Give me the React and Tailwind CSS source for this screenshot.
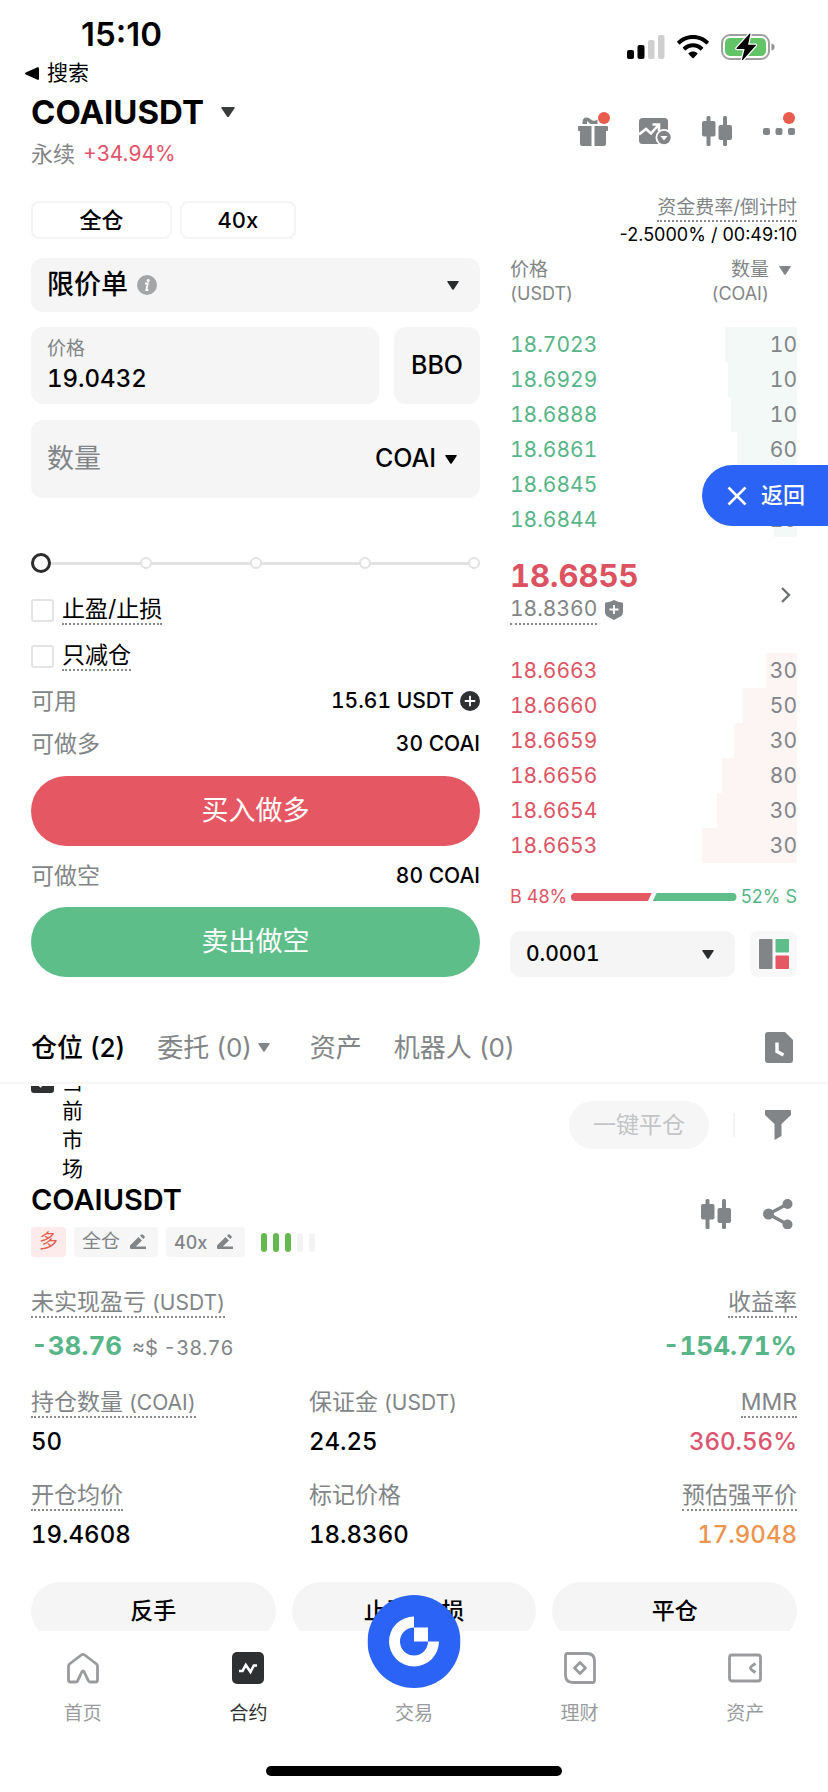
import { useState } from 'react';

const asks = [
  { price: '18.7023', qty: 10, depth: 25 },
  { price: '18.6929', qty: 10, depth: 24 },
  { price: '18.6888', qty: 10, depth: 23 },
  { price: '18.6861', qty: 60, depth: 21 },
  { price: '18.6845', qty: 60, depth: 11 },
  { price: '18.6844', qty: 20, depth: 8 },
];

const bids = [
  { price: '18.6663', qty: 30, depth: 11 },
  { price: '18.6660', qty: 50, depth: 19 },
  { price: '18.6659', qty: 30, depth: 22 },
  { price: '18.6656', qty: 80, depth: 26 },
  { price: '18.6654', qty: 30, depth: 28 },
  { price: '18.6653', qty: 30, depth: 33 },
];

function Caret({ className = 'w-3 text-[#2b2c2e]' }) {
  return (
    <svg viewBox="0 0 12 9" className={`shrink-0 pointer-events-none ${className}`} fill="currentColor" aria-hidden="true">
      <path d="M1 0h10q1.300 0 .6 1.100L6.700 8.400q-.7.900-1.400 0L.4 1.100Q-.3 0 1 0z" />
    </svg>
  );
}

function CandlesIcon() {
  return (
    <svg viewBox="0 0 30 30" className="w-[30px] h-[30px] text-[#828587]" fill="currentColor" aria-hidden="true">
      <rect x="4.500" y="0" width="4" height="30" rx="1.500" />
      <rect x="0" y="5" width="13.500" height="15.500" rx="2" />
      <rect x="21" y="0" width="4" height="30" rx="1.500" />
      <rect x="16.500" y="9" width="13.500" height="15" rx="2" />
    </svg>
  );
}

function StatusIcons() {
  return (
    <div className="flex items-center gap-3">
      <svg viewBox="0 0 38 24" className="w-[38px] h-6" aria-hidden="true">
        <rect x="0" y="15" width="7" height="9" rx="2" />
        <rect x="10.500" y="10" width="7" height="14" rx="2" />
        <rect x="21" y="5" width="6.500" height="19" rx="2" fill="#cfcfcf" />
        <rect x="31" y="0" width="6.500" height="24" rx="2" fill="#cfcfcf" />
      </svg>
      <svg viewBox="0 0 32 24" className="w-8 h-6" aria-hidden="true">
        <path d="M16 0C9.800 0 4.200 2.400.3 6.300q-.5.500 0 1l1.800 1.900q.5.500 1 0C6.500 5.900 11 4.100 16 4.100s9.500 1.800 12.900 5.100q.5.500 1 0l1.800-1.900q.5-.5 0-1C27.800 2.400 22.200 0 16 0z" />
        <path d="M16 8.200c-3.900 0-7.400 1.500-10 4-.4.400-.4.700 0 1.100l1.900 1.900q.5.400 1 0c1.900-1.800 4.400-2.900 7.100-2.900s5.200 1.100 7.100 2.900q.5.400 1 0l1.900-1.900c.4-.4.400-.7 0-1.100-2.600-2.500-6.100-4-10-4z" />
        <path d="M16 16.400c-1.700 0-3.200.6-4.400 1.600q-.5.500 0 1l3.700 4q.7.700 1.400 0l3.700-4q.5-.5 0-1c-1.200-1-2.700-1.600-4.400-1.600z" />
      </svg>
      <svg viewBox="0 0 54 28" className="w-[54px] h-7" aria-hidden="true">
        <rect x="1" y="2" width="47" height="24" rx="8" fill="none" stroke="#a0a0a0" strokeWidth="2" />
        <rect x="4" y="5" width="41" height="18" rx="5" fill="#62c466" />
        <path d="M50.500 10.500q3 .8 3 3.500t-3 3.500z" fill="#8e8e8e" />
        <path d="M28.500.8 15.600 15q-.6.900.4.900h7.600L21 26.500q-.1 1.200.9.500L34.800 12.600q.6-.9-.4-.9H27L29.400 1.300Q29.400.2 28.500.8z" stroke="#fff" strokeWidth="2.500" paintOrder="stroke" />
      </svg>
    </div>
  );
}

function StatusBar() {
  return (
    <div className="flex items-start justify-between pt-[13px] pl-[25px] pr-[53px]">
      <div>
        <div className="h-11 pl-14 text-[33px] leading-[42px] font-semibold normal-nums">15:10</div>
        <a href="#search" className="flex h-8 items-center gap-2 text-[21px] leading-8">
          <svg viewBox="0 0 14 13" className="w-3.5" aria-hidden="true">
            <path d="M12.500.2Q14 0 14 1.200v10.600q0 1.400-1.500 1L.8 7.400q-1.400-.9 0-1.800z" />
          </svg>
          搜索
        </a>
      </div>
      <div className="flex h-[68px] items-center">
        <StatusIcons />
      </div>
    </div>
  );
}

function SymbolHeader() {
  return (
    <header className="flex items-center justify-between pl-[31px] pr-[33px]">
      <div>
        <h1>
          <button className="flex h-[46px] items-center gap-[17px] text-[33px] leading-[46px] font-bold">
            COAIUSDT
            <Caret className="w-3.5 text-[#3a3b3d]" />
          </button>
        </h1>
        <div className="flex h-[38px] items-center gap-2 text-[21px] normal-nums">
          <span className="text-[22px] text-[#828587]">永续</span>
          <span className="text-[#e0546b]">+34.94%</span>
        </div>
      </div>
      <div className="flex items-center gap-[31px] text-[#828587]">
        <button aria-label="活动" className="relative">
          <svg viewBox="0 0 30 30" className="w-[30px] h-[30px]" fill="currentColor" aria-hidden="true">
            <path d="M1 10h12.500v20H4q-2 0-2-2V15H1q-1 0-1-1v-3q0-1 1-1zM16.500 10H29q1 0 1 1v3q0 1-1 1h-1v13q0 2-2 2h-9.500z" />
            <path d="M4.500 8V6q0-4.500 4-4.500 2.500 0 4.500 2t4.500 1l2-1V8z M9 5v3h3.500z" fillRule="evenodd" />
          </svg>
          <span className="absolute -top-1 -right-0.5 size-3 rounded-full bg-[#e85b4d]" />
        </button>
        <button aria-label="行情提醒">
          <svg viewBox="0 0 32 28" className="w-8 h-7" aria-hidden="true">
            <rect x="0" y="1" width="29" height="26" rx="3.500" fill="currentColor" />
            <path d="M0 17.500 7 12l5 4.500L19 8.500M13.500 7.500H20V14" fill="none" stroke="#fff" strokeWidth="2.600" />
            <circle cx="25" cy="20.500" r="8.500" fill="#fff" />
            <circle cx="25" cy="20.500" r="6.700" fill="currentColor" />
            <path d="M21.500 19h7L25 23.500z" fill="#fff" />
          </svg>
        </button>
        <button aria-label="K线">
          <CandlesIcon />
        </button>
        <button aria-label="更多" className="relative flex w-8 h-[30px] items-center">
          <svg viewBox="0 0 32 8" className="w-8" fill="currentColor" aria-hidden="true">
            <rect x="0" y="1" width="7" height="7" rx="2" />
            <rect x="12.500" y="1" width="7" height="7" rx="2" />
            <rect x="25" y="1" width="7" height="7" rx="2" />
          </svg>
          <span className="absolute -top-1 right-0 size-3 rounded-full bg-[#e85b4d]" />
        </button>
      </div>
    </header>
  );
}

function CheckRow({ id, label, className }) {
  return (
    <div className={`flex h-[30px] items-center gap-2 ${className}`}>
      <input id={id} type="checkbox" className="size-[23px] appearance-none rounded-[3px] border-2 border-[#e4e4e4] checked:bg-[#333]" />
      <label htmlFor={id} className="border-b-2 border-dotted border-[#8a8a8a] text-[23px] leading-7">
        {label}
      </label>
    </div>
  );
}

function InfoRow({ label, className, children }) {
  return (
    <div className={`flex h-[30px] items-center justify-between text-[21px] ${className}`}>
      <span className="text-[23px] text-[#828587]">{label}</span>
      <span className="flex items-center gap-[6px] font-medium">{children}</span>
    </div>
  );
}

function OrderForm() {
  const [price, setPrice] = useState('19.0432');
  const [qty, setQty] = useState('');
  const [percent, setPercent] = useState(0);

  return (
    <section className="flex min-w-0 flex-col pt-[5px]" aria-label="下单">
      <div className="flex gap-2 text-[22px] font-medium">
        <button className="h-[38px] w-[141px] rounded-lg border-2 border-[#f4f4f4]">全仓</button>
        <button className="h-[38px] w-[116px] rounded-lg border-2 border-[#f4f4f4]">40x</button>
      </div>

      <div className="mt-[19px] flex h-[54px] items-center rounded-xl bg-[#f5f5f5] pl-4 pr-[21px]">
        <select aria-label="订单类型" className="appearance-none bg-transparent text-[27px] font-medium outline-none">
          <option>限价单</option>
        </select>
        <svg viewBox="0 0 20 20" className="ml-[9px] size-5" aria-hidden="true">
          <circle cx="10" cy="10" r="10" fill="#a3a5a7" />
          <circle cx="11.200" cy="5.400" r="1.500" fill="#fff" />
          <path d="M8 8.500h2.800L9.300 15h2" fill="none" stroke="#fff" strokeWidth="1.800" />
        </svg>
        <Caret className="ml-auto w-3 text-[#2b2c2e]" />
      </div>

      <div className="mt-[15px] flex h-[77px] gap-[15px]">
        <div className="flex min-w-0 flex-1 flex-col rounded-xl bg-[#f5f5f5] px-4 pt-2">
          <label htmlFor="price" className="text-[19px] leading-7 text-[#828587]">价格</label>
          <input
            id="price"
            value={price}
            onChange={(e) => setPrice(e.target.value)}
            className="h-8 w-full bg-transparent text-2xl font-medium outline-none"
          />
        </div>
        <button className="w-[86px] rounded-xl bg-[#f5f5f5] text-[25px] font-medium">BBO</button>
      </div>

      <div className="mt-4 flex h-[78px] items-center rounded-xl bg-[#f5f5f5] pl-4 pr-[23px]">
        <input
          aria-label="数量"
          placeholder="数量"
          value={qty}
          onChange={(e) => setQty(e.target.value)}
          className="h-10 min-w-0 flex-1 bg-transparent text-[27px] outline-none placeholder:text-[#828587]"
        />
        <select aria-label="数量单位" className="mr-2 appearance-none bg-transparent text-[25px] font-medium outline-none">
          <option>COAI</option>
        </select>
        <Caret className="w-3 text-black" />
      </div>

      <div className="relative mt-[53px] flex h-6 items-center">
        <div className="h-[3px] w-full bg-[#e2e2e2]" />
        <div className="absolute inset-x-0 flex justify-between">
          {[0, 25, 50, 75, 100].map((p) => (
            <span key={p} className="size-3 rounded-full border-2 border-[#e2e2e2] bg-white" />
          ))}
        </div>
        <input
          type="range"
          min="0"
          max="100"
          value={percent}
          onChange={(e) => setPercent(Number(e.target.value))}
          aria-label="仓位比例"
          className="absolute inset-x-0 w-full appearance-none bg-transparent [&::-webkit-slider-thumb]:size-5 [&::-webkit-slider-thumb]:appearance-none [&::-webkit-slider-thumb]:rounded-full [&::-webkit-slider-thumb]:border-3 [&::-webkit-slider-thumb]:border-solid [&::-webkit-slider-thumb]:border-[#2b2c2e] [&::-webkit-slider-thumb]:bg-white"
        />
      </div>

      <CheckRow id="tpsl" label="止盈/止损" className="mt-5" />
      <CheckRow id="reduce" label="只减仓" className="mt-4" />

      <InfoRow label="可用" className="mt-[15px]">
        15.61 USDT
        <button aria-label="划转">
          <svg viewBox="0 0 20 20" className="size-5" aria-hidden="true">
            <circle cx="10" cy="10" r="10" fill="#2f3032" />
            <path d="M10 4.800v10.400M4.800 10h10.400" stroke="#fff" strokeWidth="1.800" />
          </svg>
        </button>
      </InfoRow>
      <InfoRow label="可做多" className="mt-[13px]">30 COAI</InfoRow>
      <button className="mt-[17px] h-[70px] rounded-full bg-[#e55762] text-[27px] text-white">买入做多</button>
      <InfoRow label="可做空" className="mt-[15px]">80 COAI</InfoRow>
      <button className="mt-4 h-[70px] rounded-full bg-[#5ebe8a] text-[27px] text-white">卖出做空</button>
    </section>
  );
}

function BookRows({ rows, priceClass, tint }) {
  return (
    <tbody>
      {rows.map((r) => (
        <tr
          key={r.price}
          className="h-[35px] text-[21px] leading-[35px]"
          style={{ backgroundImage: `linear-gradient(to left, ${tint} ${r.depth}%, transparent ${r.depth}%)` }}
        >
          <td className={`p-0 ${priceClass}`}>{r.price}</td>
          <td className="p-0 text-right text-[#828587]">{r.qty}</td>
        </tr>
      ))}
    </tbody>
  );
}

function OrderBook() {
  return (
    <section className="relative flex min-w-0 flex-col" aria-label="盘口">
      <div className="flex flex-col items-end">
        <span className="border-b-2 border-dotted border-[#8a8a8a] text-[19px] leading-6 text-[#828587]">资金费率/倒计时</span>
        <span className="text-[18px] leading-[25px] normal-nums">-2.5000% / 00:49:10</span>
      </div>

      <table className="mt-[11px] w-full border-collapse">
        <thead>
          <tr className="h-[69px] text-[19px] leading-6 text-[#828587]">
            <th className="p-0 text-left align-top font-normal">价格<br /><span className="text-[18px]">(USDT)</span></th>
            <th className="p-0 align-top font-normal">
              <div className="flex items-start justify-end gap-[10px] pr-[6px] text-right">
                <span>数量<br /><span className="text-[18px]">(COAI)</span></span>
                <Caret className="mt-2 w-3 text-[#828587]" />
              </div>
            </th>
          </tr>
        </thead>
        <BookRows rows={asks} priceClass="text-[#57b588]" tint="#f2f9f7" />
        <tbody>
          <tr className="h-[116px]">
            <td colSpan={2} className="p-0">
              <div className="flex items-center justify-between pr-[6px]">
                <div className="pb-2">
                  <div className="text-[31px] leading-[38px] font-bold text-[#dc5261]">18.6855</div>
                  <div className="flex items-center gap-2 text-[#828587]">
                    <span className="border-b-2 border-dotted border-[#8a8a8a] text-[21px] leading-7">18.8360</span>
                    <svg viewBox="0 0 18 20" className="w-[18px]" aria-hidden="true">
                      <path d="M9 0q4 2.300 8 2.500 1 .1 1 1V12q0 3-2.500 4.600L9 20l-6.500-3.400Q0 15 0 12V3.500q0-.9 1-1Q5 2.300 9 0z" fill="currentColor" />
                      <path d="M9 5v9M4.500 9.500h9" stroke="#fff" strokeWidth="1.800" />
                    </svg>
                  </div>
                </div>
                <button aria-label="展开盘口">
                  <svg viewBox="0 0 10 16" className="w-[10px] h-4" fill="none" stroke="#6f7274" strokeWidth="2.400" aria-hidden="true">
                    <path d="M1 1l7 7-7 7" />
                  </svg>
                </button>
              </div>
            </td>
          </tr>
        </tbody>
        <BookRows rows={bids} priceClass="text-[#dc5565]" tint="#fdf4f4" />
      </table>

      <div className="mt-[22px] flex h-6 items-center justify-between gap-1 text-[18px] leading-6 normal-nums">
        <span className="whitespace-nowrap text-[#dc5565]">B 48%</span>
        <svg viewBox="0 0 172 8" preserveAspectRatio="none" className="h-2 min-w-0 flex-1" aria-hidden="true">
          <path d="M4 0h80l-4 8H4Q0 8 0 4t4-4z" fill="#e55762" />
          <path d="M89 0h79q4 0 4 4t-4 4H85z" fill="#5ebe8a" />
        </svg>
        <span className="whitespace-nowrap text-[#57b588]">52% S</span>
      </div>

      <div className="mt-auto flex gap-[15px]">
        <div className="flex h-[46px] min-w-0 flex-1 items-center rounded-[10px] bg-[#f5f5f5] pl-4 pr-[21px]">
          <select aria-label="价格精度" className="min-w-0 flex-1 appearance-none bg-transparent text-[21px] font-medium outline-none">
            <option>0.0001</option>
          </select>
          <Caret />
        </div>
        <button aria-label="盘口布局" className="flex h-[46px] w-[47px] items-center justify-center rounded-lg bg-[#f8f8f8]">
          <svg viewBox="0 0 30 30" className="w-[30px]" aria-hidden="true">
            <rect x="0" y="0" width="13.500" height="30" rx="1" fill="#828587" />
            <rect x="16.500" y="0" width="13.500" height="13.500" rx="1" fill="#5ebe8a" />
            <rect x="16.500" y="16.500" width="13.500" height="13.500" rx="1" fill="#e55762" />
          </svg>
        </button>
      </div>

      <button className="absolute top-[269px] -right-[31px] flex h-[61px] w-[126px] items-center gap-[14px] rounded-l-full bg-[#2a63f5] pl-[25px] text-[22px] font-medium text-white">
        <svg viewBox="0 0 20 20" className="size-5" fill="none" stroke="currentColor" strokeWidth="2.500" aria-hidden="true">
          <path d="M1.500 1.500l17 17M18.500 1.500l-17 17" />
        </svg>
        返回
      </button>
    </section>
  );
}

function Tabs() {
  return (
    <div className="mt-[35px] flex h-[72px] shrink-0 items-center border-b-2 border-[#f5f5f5] px-[31px] text-[26px] text-[#828587] normal-nums">
      <button className="font-medium text-black">仓位 (2)</button>
      <button className="ml-8 flex items-center gap-[6px]">
        委托 (0)
        <Caret className="w-3 text-[#828587]" />
      </button>
      <button className="ml-10">资产</button>
      <button className="ml-8">机器人 (0)</button>
      <button aria-label="历史记录" className="ml-auto mr-1">
        <svg viewBox="0 0 28 31" className="w-7" aria-hidden="true">
          <path d="M3 0h17l8 8v20q0 3-3 3H3q-3 0-3-3V3q0-3 3-3z" fill="currentColor" />
          <path d="M12 10.500v9l6.500 3.500" fill="none" stroke="#fff" strokeWidth="3.400" />
        </svg>
      </button>
    </div>
  );
}

function PencilIcon() {
  return (
    <svg viewBox="0 0 16 16" className="size-4" fill="currentColor" aria-hidden="true">
      <path d="M0 11.500 8.500 3 12 6.500 5.800 12.500H16V15H1Q0 15 0 14zM10 1.700 11 .7q1-1 2 0L14.300 2q1 1 0 2l-1 1z" />
    </svg>
  );
}

function Stat({ label, unit, value, dotted = true, right, valueClass = '' }) {
  return (
    <div className={`flex flex-col ${right ? 'items-end' : 'items-start'}`}>
      <dt className={`border-b-2 border-dotted text-[23px] leading-[27px] text-[#828587] ${dotted ? 'border-[#8a8a8a]' : 'border-transparent'}`}>
        {label}
        {unit && <span className="text-[21px]"> ({unit})</span>}
      </dt>
      <dd className={`mt-[9px] text-2xl leading-[30px] ${valueClass}`}>{value}</dd>
    </div>
  );
}

function Position() {
  return (
    <section className="px-[31px]" aria-label="当前仓位">
      {/* list is scrolled a little, so the first line sits under the tabs */}
      <div className="-mt-[19px] flex items-center">
        <div className="relative mt-[3px] self-start">
          <input id="current-market" type="checkbox" defaultChecked className="block size-[23px] appearance-none rounded-[3px] bg-[#2f3032]" />
          <svg viewBox="0 0 23 23" className="pointer-events-none absolute inset-0" fill="none" stroke="#fff" strokeWidth="2.500" aria-hidden="true">
            <path d="M4.500 11l5 5 9-9" />
          </svg>
        </div>
        <label htmlFor="current-market" className="ml-2 w-[22px] text-[21px] leading-[29px]">当前市场</label>
        <button disabled className="ml-auto h-12 w-[140px] rounded-full bg-[#f6f6f6] text-[23px] text-[#c2c4c6]">一键平仓</button>
        <span className="ml-6 h-6 w-0.5 bg-[#f3f3f3]" />
        <button aria-label="筛选" className="ml-[30px] mr-[6px] text-[#828587]">
          <svg viewBox="0 0 26 30" className="w-[26px]" fill="currentColor" aria-hidden="true">
            <path d="M1 0h24q1 0 1 1v4L16.500 14v12L9.500 30V14L0 5V1q0-1 1-1z" />
          </svg>
        </button>
      </div>

      <div className="flex justify-between">
        <div>
          <h2 className="text-[29px] leading-[34px] font-semibold">COAIUSDT</h2>
          <div className="mt-[10px] flex h-[30px] items-center gap-2 text-[19px] text-[#828587]">
            <span className="flex h-full w-[35px] items-center justify-center rounded bg-[#fcebea] text-[#e5604f]">多</span>
            <button className="flex h-full items-center gap-[10px] rounded bg-[#f6f6f6] pl-2 pr-3">全仓 <PencilIcon /></button>
            <button className="flex h-full items-center gap-[10px] rounded bg-[#f6f6f6] pl-2 pr-3 text-[18px] font-medium">40x <PencilIcon /></button>
            <span className="ml-2 flex gap-[6px]">
              {[1, 2, 3, 4, 5].map((n) => (
                <i key={n} className={`h-[19px] w-[6px] rounded-full ${n < 4 ? 'bg-[#63b84e]' : 'bg-[#f3f3f3]'}`} />
              ))}
            </span>
          </div>
        </div>
        <div className="mt-4 mr-1 flex items-start gap-8 text-[#828587]">
          <button aria-label="查看K线"><CandlesIcon /></button>
          <button aria-label="分享">
            <svg viewBox="0 0 30 30" className="w-[30px]" fill="currentColor" aria-hidden="true">
              <path d="M24.500 5 5.500 15l19 10.500" fill="none" stroke="currentColor" strokeWidth="3.200" />
              <circle cx="24.500" cy="5" r="5" />
              <circle cx="5.500" cy="15" r="5.500" />
              <circle cx="24.500" cy="25.500" r="5" />
            </svg>
          </button>
        </div>
      </div>

      <dl className="mt-8 grid grid-cols-2">
        <Stat
          label="未实现盈亏"
          unit="USDT"
          valueClass="pt-1"
          value={
            <span className="flex items-baseline gap-[10px]">
              <span className="text-[26px] font-bold text-[#57b588]">-38.76</span>
              <span className="text-[20px] text-[#828587]">≈$ -38.76</span>
            </span>
          }
        />
        <Stat label="收益率" right value="-154.71%" valueClass="pt-1 text-[26px] font-bold text-[#57b588]" />
      </dl>
      <dl className="mt-[26px] grid grid-cols-[278fr_244fr_244fr] gap-y-[25px]">
        <Stat label="持仓数量" unit="COAI" value="50" valueClass="font-medium" />
        <Stat label="保证金" unit="USDT" value="24.25" dotted={false} valueClass="font-medium" />
        <Stat label="MMR" value="360.56%" right valueClass="font-medium text-[#dc5570]" />
        <Stat label="开仓均价" value="19.4608" valueClass="font-medium" />
        <Stat label="标记价格" value="18.8360" dotted={false} valueClass="font-medium" />
        <Stat label="预估强平价" value="17.9048" right valueClass="font-medium text-[#eb9550]" />
      </dl>

      <div className="mt-8 grid grid-cols-3 gap-4 text-[23px] font-medium">
        <button className="h-[58px] rounded-full bg-[#f5f5f5]">反手</button>
        <button className="h-[58px] rounded-full bg-[#f5f5f5]">止盈/止损</button>
        <button className="h-[58px] rounded-full bg-[#f5f5f5]">平仓</button>
      </div>
    </section>
  );
}

function NavItem({ label, active, children }) {
  return (
    <a href="#nav" aria-current={active ? 'page' : undefined} className={`flex flex-1 flex-col items-center ${active ? 'text-[#2f3032]' : 'text-[#999b9e]'}`}>
      <span className="flex h-[34px] items-center">{children}</span>
      <span className="mt-[14px] text-[19px] leading-[30px]">{label}</span>
    </a>
  );
}

function BottomNav() {
  return (
    <nav className="relative shrink-0 bg-white pt-5 pb-4">
      <div className="flex">
        <NavItem label="首页">
          <svg viewBox="0 0 34 34" className="w-[34px]" fill="none" stroke="currentColor" strokeWidth="2.800" strokeLinejoin="round" aria-hidden="true">
            <path d="M15.300 4 3.500 13Q2.500 14 2.500 15.500V29q0 2 2 2h5.500q1 0 1.500-1L15.800 21q1.200-2 2.400 0l4.300 9q.5 1 1.500 1h5.500q2 0 2-2V15.500q0-1.500-1-2.500L18.700 4q-1.700-1.300-3.400 0z" />
          </svg>
        </NavItem>
        <NavItem label="合约" active>
          <svg viewBox="0 0 34 34" className="w-[34px]" aria-hidden="true">
            <rect x="1" y="1" width="32" height="32" rx="5" fill="currentColor" />
            <path d="M8 20h3.500l3.300-6 4.700 7 3.300-6.500H26" fill="none" stroke="#fff" strokeWidth="2.600" />
          </svg>
        </NavItem>
        <NavItem label="交易">
          <svg viewBox="0 0 93 93" className="absolute -top-9 left-1/2 w-[93px] -translate-x-1/2" aria-hidden="true">
            <circle cx="46.500" cy="46.500" r="46.500" fill="#2a63f5" />
            <path d="M46.500 21.500a25 25 0 1 0 25 25h-11a14 14 0 1 1-14-14z" fill="#fff" />
            <rect x="46.500" y="32.500" width="14" height="14" fill="#fff" />
          </svg>
        </NavItem>
        <NavItem label="理财">
          <svg viewBox="0 0 34 34" className="w-[34px]" fill="none" stroke="currentColor" strokeWidth="2.800" strokeLinejoin="round" aria-hidden="true">
            <path d="M4.500 2.500H24q7.500 0 7.500 7.500v19.500q0 2-2 2H10q-7.500 0-7.500-7.500V4.500q0-2 2-2z" />
            <path d="M17 11.500 22.500 17 17 22.500 11.500 17z" />
          </svg>
        </NavItem>
        <NavItem label="资产">
          <svg viewBox="0 0 34 34" className="w-[34px]" fill="none" stroke="currentColor" strokeWidth="2.800" strokeLinejoin="round" aria-hidden="true">
            <rect x="1.500" y="4" width="31" height="26" rx="2.500" />
            <path d="M27.500 12.500Q22.500 15.500 22.500 17t5 4.500" strokeWidth="3" />
          </svg>
        </NavItem>
      </div>
      <div className="mx-auto mt-[37px] h-[10px] w-[296px] rounded-full bg-black" />
    </nav>
  );
}

export default function App() {
  return (
    <main className="flex h-screen flex-col overflow-hidden bg-white font-['Inter','Noto_Sans_CJK_SC',sans-serif] text-black tabular-nums">
      <StatusBar />
      <SymbolHeader />
      <div className="mt-[23px] grid shrink-0 grid-cols-[449fr_287fr] gap-[30px] px-[31px]">
        <OrderForm />
        <OrderBook />
      </div>
      <Tabs />
      <div className="mt-0.5 min-h-0 flex-1 overflow-hidden">
        <Position />
      </div>
      <BottomNav />
    </main>
  );
}
